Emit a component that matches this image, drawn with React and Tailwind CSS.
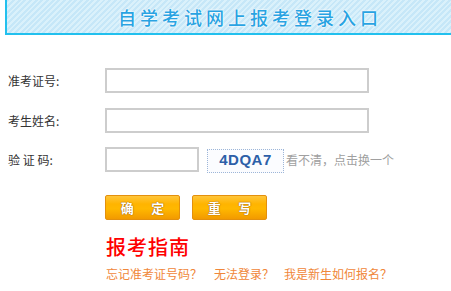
export default function App() {
  const font = "font-['Noto_Sans_CJK_SC','Noto_Sans',sans-serif]";
  return (
    <div className={`w-[451px] h-[291px] bg-white overflow-hidden ${font}`}>
      {/* header bar */}
      <div className="ml-[5px] h-[35px] border-l-2 border-b-2 border-[#22c0ee] bg-[repeating-linear-gradient(135deg,#c6e7f8_0px,#c6e7f8_2px,#daf1fb_2px,#daf1fb_4px)] flex items-center justify-center">
        <span className="ml-[42px] text-[18px] leading-none font-medium tracking-[4px] text-[#29a3e2] [text-shadow:0_0_2px_#fff,0_0_2px_#fff,0_0_1px_#fff]">
          自学考试网上报考登录入口
        </span>
      </div>

      <div className="pl-2 pt-[33px]">
        <div className="flex items-center h-[25px]">
          <label className="w-[97px] text-[12px] text-[#333]">准考证号:</label>
          <input className="w-[264px] h-[25px] border-2 border-[#cdcdcd] outline-none" />
        </div>
        <div className="flex items-center h-[25px] mt-[15px]">
          <label className="w-[97px] text-[12px] text-[#333]">考生姓名:</label>
          <input className="w-[264px] h-[25px] border-2 border-[#cdcdcd] outline-none" />
        </div>
        <div className="flex items-center h-[25px] mt-[14px]">
          <label className="w-[97px] text-[12px] text-[#333] whitespace-pre">验 证 码:</label>
          <input className="w-[94px] h-[25px] border-2 border-[#cdcdcd] outline-none" />
          <div className="ml-[8px] w-[77px] h-[24px] mt-[2px] border border-dotted border-[#9db6d8] bg-[#fbfcff] flex items-center justify-center">
            <span className="font-['Liberation_Sans',sans-serif] font-bold text-[15px] text-[#2d5fa8] tracking-[0.5px]">4DQA7</span>
          </div>
          <span className="ml-[2px] text-[12px] text-[#a0a0a0]">看不清，点击换一个</span>
        </div>

        <div className="flex mt-[23px] ml-[97px] gap-[12px]">
          <button className="w-[75px] h-[25px] rounded-[2px] border border-[#e3900d] bg-[linear-gradient(#ffc53a_0%,#ffb400_35%,#ffb800_55%,#f29a00_100%)] text-white text-[13px] font-bold whitespace-pre [text-shadow:0_0_1px_#9a5a00,0_0_1px_#9a5a00]">
            确{"      "}定
          </button>
          <button className="w-[75px] h-[25px] rounded-[2px] border border-[#e3900d] bg-[linear-gradient(#ffc53a_0%,#ffb400_35%,#ffb800_55%,#f29a00_100%)] text-white text-[13px] font-bold whitespace-pre [text-shadow:0_0_1px_#9a5a00,0_0_1px_#9a5a00]">
            重{"      "}写
          </button>
        </div>

        <div className="ml-[98px] mt-[14px] text-[20px] leading-[26px] font-medium tracking-[1px] text-[#ff0000]">报考指南</div>
        <div className="ml-[98px] mt-[5px] flex text-[12px] text-[#f0873a]">
          <span>忘记准考证号码？</span>
          <span className="ml-[12px]">无法登录？</span>
          <span className="ml-[10px]">我是新生如何报名？</span>
        </div>
      </div>
    </div>
  );
}
